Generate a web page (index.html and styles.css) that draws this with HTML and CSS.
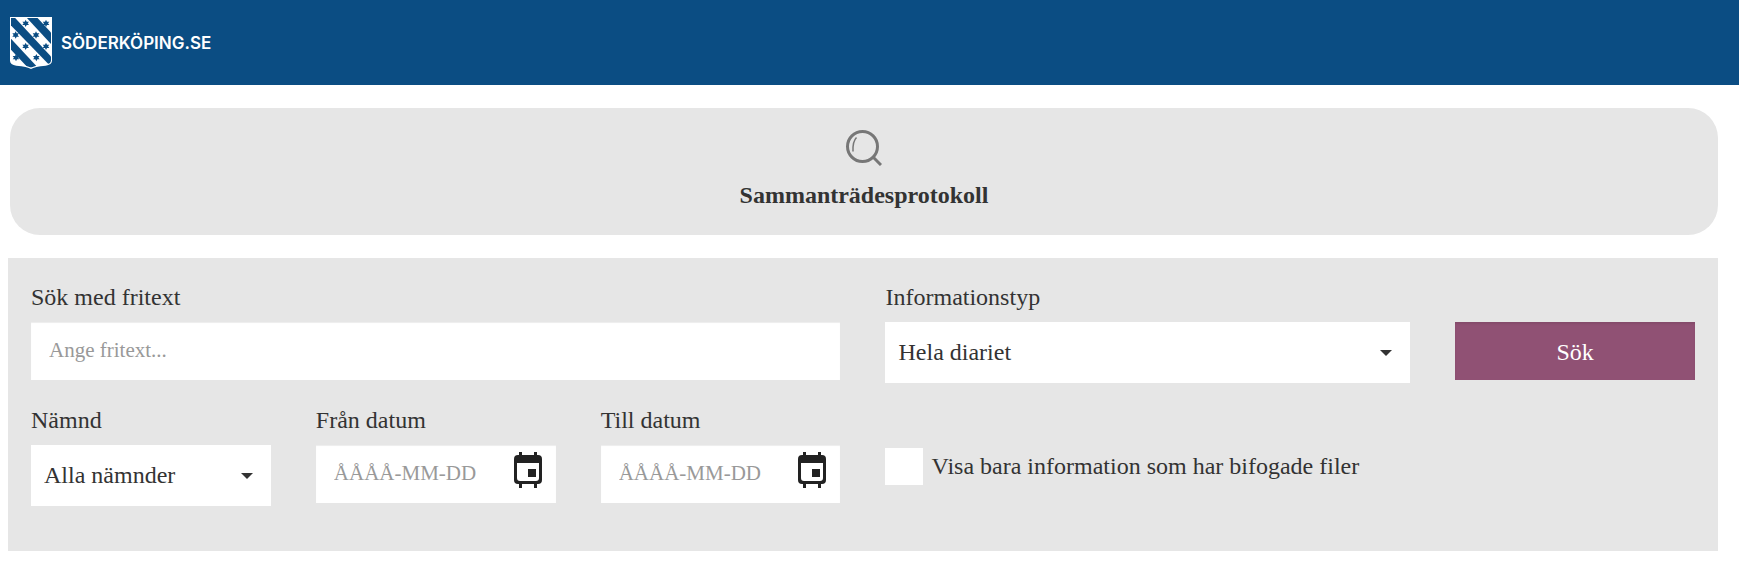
FILE: index.html
```html
<!DOCTYPE html>
<html lang="sv">

<head>
    <meta charset="UTF-8">
    <meta name="viewport" content="width=device-width, initial-scale=1.0">
    <title>Sammanträdesprotokoll</title>
    <link rel="stylesheet" href="styles.css">
</head>

<body>
    <header class="site-header">
        <a href="#" class="logo">
            <svg class="logo-shield" viewBox="0 0 126 156" aria-hidden="true">
                <defs>
                    <clipPath id="shieldClip">
                        <path d="M3 3H123V130Q123 141 106 143Q74 145 63 152Q52 145 20 143Q3 141 3 130Z" />
                    </clipPath>
                    <path id="star" d="M0-11L3-5H10L6 0L10 5H3L0 11L-3 5H-10L-6 0L-10-5H-3Z" />
                </defs>
                <path fill="#fff" d="M0 0H126V131Q126 143 107 146Q74 148 63 156Q52 148 19 146Q0 143 0 131Z" />
                <g fill="#0b4d83" clip-path="url(#shieldClip)">
                    <path d="M-4-18L126 122V152L-4 18Z" />
                    <path d="M48 0H80L126 50V84Z" />
                    <path d="M0 62L84 152H54L0 95Z" />
                    <use href="#star" x="47" y="19" />
                    <use href="#star" x="108" y="19" />
                    <use href="#star" x="17" y="54" />
                    <use href="#star" x="78" y="54" />
                    <use href="#star" x="47" y="88" />
                    <use href="#star" x="108" y="88" />
                    <use href="#star" x="18" y="122" />
                    <use href="#star" x="79" y="122" />
                </g>
            </svg>
            <span>SÖDERKÖPING.SE</span>
        </a>
    </header>

    <main>
        <div class="banner">
            <svg class="banner-icon" viewBox="0 0 36 36" fill="none" stroke="#777" aria-hidden="true">
                <circle cx="16.5" cy="16.5" r="15" stroke-width="3" />
                <path d="M10.500 7.500Q6.500 11.500 7 21.500" stroke-width="1.500" />
                <path d="M27 27L35 35" stroke-width="3" />
            </svg>
            <h1>Sammanträdesprotokoll</h1>
        </div>

        <form id="searchForm" class="search-form">
            <div class="form-group span-3">
                <label for="fritext">Sök med fritext</label>
                <div class="text-box">
                    <input type="text" id="fritext" name="fritext" placeholder="Ange fritext...">
                </div>
            </div>

            <div class="form-group span-2">
                <label for="infotyp">Informationstyp</label>
                <div class="select-box">
                    <select id="infotyp" name="infotyp">
                        <option>Hela diariet</option>
                    </select>
                </div>
            </div>

            <button type="submit" class="search-button">Sök</button>

            <div class="form-group">
                <label for="namnd">Nämnd</label>
                <div class="select-box">
                    <select id="namnd" name="namnd">
                        <option>Alla nämnder</option>
                    </select>
                </div>
            </div>

            <div class="form-group">
                <label for="franDatum">Från datum</label>
                <div class="text-box">
                    <input type="text" id="franDatum" name="franDatum" placeholder="ÅÅÅÅ-MM-DD">
                    <button type="button" class="date-button" aria-label="Välj från datum">
                        <svg viewBox="0 0 30 36" aria-hidden="true">
                            <path fill="#222" fill-rule="evenodd" d="M6 0H9V3H21V0H24V3H25Q29 3 29 7V28Q29 32 25 32H24V36H21V32H9V36H6V32H5Q1 32 1 28V7Q1 3 5 3H6ZM4 11V26Q4 29 7 29H23Q26 29 26 26V11Z" />
                            <rect x="15" y="17" width="8" height="8" fill="#222" />
                        </svg>
                    </button>
                </div>
            </div>

            <div class="form-group">
                <label for="tillDatum">Till datum</label>
                <div class="text-box">
                    <input type="text" id="tillDatum" name="tillDatum" placeholder="ÅÅÅÅ-MM-DD">
                    <button type="button" class="date-button" aria-label="Välj till datum">
                        <svg viewBox="0 0 30 36" aria-hidden="true">
                            <path fill="#222" fill-rule="evenodd" d="M6 0H9V3H21V0H24V3H25Q29 3 29 7V28Q29 32 25 32H24V36H21V32H9V36H6V32H5Q1 32 1 28V7Q1 3 5 3H6ZM4 11V26Q4 29 7 29H23Q26 29 26 26V11Z" />
                            <rect x="15" y="17" width="8" height="8" fill="#222" />
                        </svg>
                    </button>
                </div>
            </div>

            <div class="check-group span-3">
                <input type="checkbox" id="bifogade" name="bifogade">
                <label for="bifogade">Visa bara information som har bifogade filer</label>
            </div>
        </form>
    </main>
</body>

</html>
```
FILE: styles.css
```css
* {
    box-sizing: border-box;
}

body {
    margin: 0;
    background: #fff;
    color: #333;
    font-family: "Liberation Serif", "Times New Roman", serif;
    font-size: 24px;
    line-height: 32px;
}

.site-header {
    display: flex;
    align-items: center;
    padding: 17px 10px 16px;
    background: #0b4d83;
}

.logo {
    display: flex;
    align-items: center;
    gap: 9px;
    color: #fff;
    font-family: Inter, sans-serif;
    font-size: 17px;
    font-weight: 600;
    text-decoration: none;
}

.logo-shield {
    width: 42px;
    height: 52px;
}

main {
    padding: 23px 21px 24px 8px;
}

.banner {
    display: flex;
    flex-direction: column;
    align-items: center;
    gap: 13px;
    margin-left: 2px;
    padding: 22px 0 24px;
    border-radius: 30px;
    background: #e6e6e6;
}

.banner-icon {
    width: 36px;
    height: 36px;
}

h1 {
    margin: 0;
    font-size: 24px;
    line-height: 32px;
}

.search-form {
    display: grid;
    grid-template-columns: repeat(6, minmax(0, 1fr));
    gap: 21px 45px;
    margin-top: 23px;
    padding: 23px 23px 45px;
    background: #e6e6e6;
}

.span-2 {
    grid-column: span 2;
}

.span-3 {
    grid-column: span 3;
}

.form-group > label {
    display: block;
    margin-bottom: 9px;
}

input,
select,
button {
    margin: 0;
    border: none;
    border-radius: 0;
    font-family: inherit;
}

.text-box {
    display: flex;
    height: 58px;
    background: #fff;
    box-shadow: inset 0 1px 1px rgba(0, 0, 0, 0.075);
}

.text-box input {
    flex: 1;
    min-width: 0;
    padding: 0 0 2px 18px;
    background: none;
    color: #333;
    font-size: 21px;
}

.text-box input::placeholder {
    color: #999;
}

.date-button {
    width: 43px;
    padding: 7px 13px 0 0;
    background: none;
    cursor: pointer;
}

.date-button svg {
    display: block;
    width: 30px;
    height: 36px;
    margin-bottom: 15px;
}

.select-box {
    display: grid;
    align-items: center;
    background: #fff;
}

.select-box select {
    grid-area: 1 / 1;
    width: 100%;
    height: 61px;
    padding: 0 40px 2px 13px;
    appearance: none;
    background: none;
    color: #333;
    font-size: 24px;
}

/* drop-down arrow */
.select-box::after {
    content: "";
    grid-area: 1 / 1;
    justify-self: end;
    margin-right: 18px;
    border: 6px solid transparent;
    border-top-color: #333;
    border-bottom: none;
    pointer-events: none;
}

.search-button {
    height: 58px;
    margin-top: 41px;
    padding: 2px 0 0;
    background: #905174;
    box-shadow: inset 0 2px 2px rgba(0, 0, 0, 0.075);
    color: #fff;
    font-size: 24px;
    cursor: pointer;
}

.check-group {
    display: flex;
    align-items: center;
    gap: 8px;
    padding-top: 22px;
}

.check-group input {
    width: 38px;
    height: 37px;
    appearance: none;
    background: #fff;
}

.check-group input:checked {
    background: #905174;
}

@media (max-width: 1200px) {
    .search-form {
        grid-template-columns: 1fr;
    }

    .span-2,
    .span-3 {
        grid-column: auto;
    }

    .search-button {
        margin-top: 0;
    }
}
```
